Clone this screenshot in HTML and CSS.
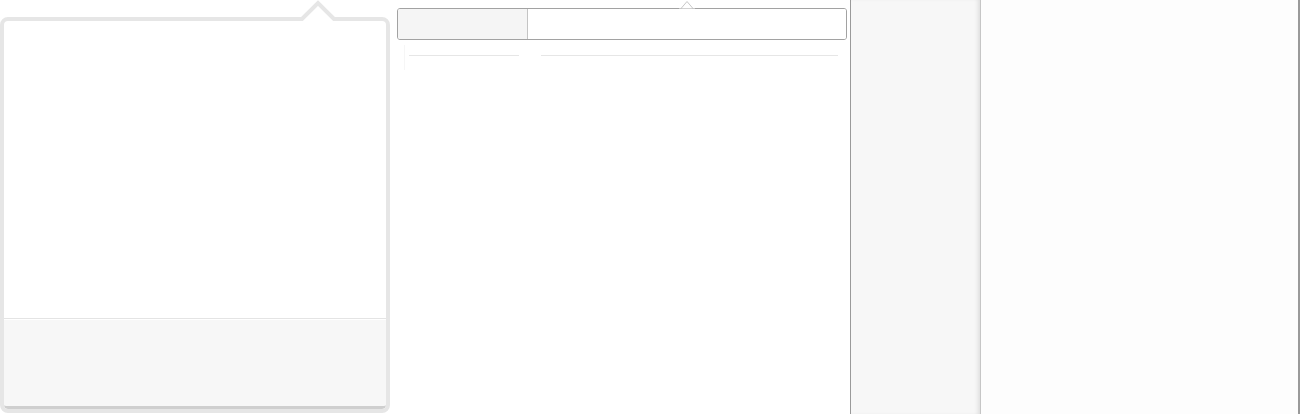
FILE: index.html
```html
<!DOCTYPE html>
<html lang="en">
<head>
  <meta charset="UTF-8">
  <meta name="viewport" content="width=device-width, initial-scale=1.0">
  <title>Panels</title>
  <link rel="stylesheet" href="styles.css">
</head>
<body>

<div class="popover-wrap">
  <svg class="pop-arrow" width="44" height="24" viewBox="0 0 44 24">
    <path d="M2 23 L22 3 L42 23 Z" fill="#fff"/>
    <path d="M0 19 L6 19 L22 3 L38 19 L44 19" fill="none" stroke="#e6e6e6" stroke-width="4"/>
  </svg>
  <div class="popover">
    <div class="popover-body"></div>
    <div class="popover-footer"></div>
  </div>
</div>

<div class="middle">
  <svg class="tip-arrow" width="16" height="9" viewBox="0 0 16 9">
    <path d="M0 8.5 L2 8.5 L8 1.5 L14 8.5 L16 8.5" fill="#fff" stroke="#c8c8c8" stroke-width="1"/>
  </svg>
  <div class="input-group">
    <div class="addon"></div>
    <div class="field"></div>
  </div>
  <div class="rules">
    <div class="rule short"></div>
    <div class="rule long"></div>
  </div>
</div>

<div class="side">
  <div class="side-nav"></div>
  <div class="side-main"></div>
</div>

</body>
</html>
```

FILE: styles.css
```css
/* Estilo da página */
body {
  display: flex;
  margin: 0;
  height: 414px;
  overflow: hidden;
  background: #fff;
  font-family: "Liberation Sans", Arial, sans-serif;
}

/* Popover da esquerda */
.popover-wrap {
  position: relative;
  width: 390px;
  padding-top: 17px;
  box-sizing: border-box;
  flex-shrink: 0;
}
.pop-arrow {
  position: absolute;
  left: 296px;
  top: 0;
  z-index: 2;
}
.popover {
  display: flex;
  flex-direction: column;
  height: 396px;
  border: 4px solid #e6e6e6;
  border-radius: 8px;
  background: #fff;
  box-sizing: border-box;
  overflow: hidden;
}
.popover-body {
  flex: 1;
}
.popover-footer {
  height: 87px;
  background: #f7f7f7;
  border-top: 1px solid #e4e4e4;
  border-bottom: 3px solid #cfcfcf;
  box-shadow: inset 0 1px 0 #fff;
  border-radius: 0 0 4px 4px;
}

/* Coluna do meio */
.middle {
  position: relative;
  width: 460px;
  padding: 8px 0 0 7px;
  box-sizing: border-box;
  flex-shrink: 0;
}
.tip-arrow {
  position: absolute;
  left: 289px;
  top: 0;
  z-index: 2;
}
.input-group {
  display: flex;
  width: 450px;
  height: 32px;
  border: 1px solid #a2a2a2;
  border-radius: 3px;
  box-sizing: border-box;
  overflow: hidden;
}
.addon {
  width: 129px;
  background: #f5f5f5;
  border-right: 1px solid #c4c4c4;
  box-shadow: 1px 0 2px rgba(0, 0, 0, 0.08);
}
.field {
  flex: 1;
  background: #fff;
}
.rules {
  display: flex;
  gap: 22px;
  margin: 5px 0 0 7px;
  padding: 10px 3px 0 4px;
  height: 25px;
  border-left: 1px solid #f6f6f6;
  box-sizing: border-box;
}
.rule {
  height: 1px;
  background: #e6e6e6;
}
.rule.short {
  width: 110px;
}
.rule.long {
  width: 297px;
}

/* Painel da direita */
.side {
  display: flex;
  flex: 1;
  border-left: 1px solid #9a9a9a;
}
.side-nav {
  width: 129px;
  background: #f7f7f7;
  box-shadow: inset -4px 0 4px -2px rgba(0, 0, 0, 0.1);
}
.side-main {
  width: 317px;
  background: #fdfdfd;
  border-left: 1px solid #c6c6c6;
  border-right: 2px solid #9a9a9a;
}
```
